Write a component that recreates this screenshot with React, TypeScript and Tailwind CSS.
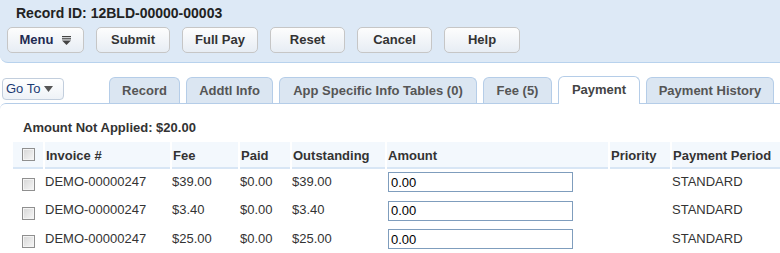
const buttons = [
  { label: 'Submit', w: 'w-[74px]' },
  { label: 'Full Pay', w: 'w-[76px]' },
  { label: 'Reset', w: 'w-[75px]' },
  { label: 'Cancel', w: 'w-[75px]' },
  { label: 'Help', w: 'w-[76px]' },
]

const tabs = [
  { label: 'Record', w: 'w-[71px]' },
  { label: 'Addtl Info', w: 'w-[87px]' },
  { label: 'App Specific Info Tables (0)', w: 'w-[198px]' },
  { label: 'Fee (5)', w: 'w-[69px]' },
  { label: 'Payment', w: 'w-[82px]', active: true },
  { label: 'Payment History', w: 'w-[128px]' },
]

const rows = [
  { invoice: 'DEMO-00000247', fee: '$39.00', paid: '$0.00', outstanding: '$39.00' },
  { invoice: 'DEMO-00000247', fee: '$3.40', paid: '$0.00', outstanding: '$3.40' },
  { invoice: 'DEMO-00000247', fee: '$25.00', paid: '$0.00', outstanding: '$25.00' },
]

const cols = 'grid grid-cols-[30px_125px_66px_50px_93px_221px_60px_109px] gap-x-[2px]'

function Checkbox() {
  return (
    <span className="block h-[13px] w-[13px] border border-[#8f8f8f] bg-gradient-to-br from-[#d6d6d6] to-[#f7f7f7] shadow-[inset_0_0_0_1px_#f4f4f4]" />
  )
}

function MenuIcon() {
  return (
    <svg width="9" height="9" viewBox="0 0 9 9" className="ml-[9px]">
      <rect x="0" y="0" width="9" height="1.2" fill="#444" />
      <rect x="0" y="2.2" width="9" height="1.2" fill="#444" />
      <polygon points="0,4.4 9,4.4 4.5,9" fill="#444" />
    </svg>
  )
}

function HeaderCell({ children }: { children?: React.ReactNode }) {
  return (
    <div className="h-[27px] border-b-2 border-[#d8e6f5] bg-[#f3f8fd] pl-[1px] pt-[6px] text-[13px] leading-[16px] font-bold text-[#333]">
      {children}
    </div>
  )
}

export default function App() {
  return (
    <div className="h-[253px] w-[780px] overflow-hidden bg-white font-['Liberation_Sans',Arial,sans-serif]">
      <div className="h-[63px] rounded-bl-[8px] border-b border-[#b8d2ed] bg-[#dde9f6]">
        <div className="pl-[16px] pt-[5px] text-[14px] leading-[16px] font-bold text-[#222]">
          Record ID: 12BLD-00000-00003
        </div>
        <div className="mt-[6px] flex gap-[12px] pl-[7px]">
          <button className="flex h-[26px] w-[77px] items-center justify-center rounded-[5px] border border-[#c6c6c6] bg-gradient-to-b from-[#fdfdfd] to-[#e7edf4] text-[13px] font-bold text-[#1e2b52]">
            Menu
            <MenuIcon />
          </button>
          {buttons.map((b) => (
            <button
              key={b.label}
              className={`h-[26px] ${b.w} rounded-[5px] border border-[#c6c6c6] bg-gradient-to-b from-[#fdfdfd] to-[#e7edf4] text-[13px] font-bold text-[#333]`}
            >
              {b.label}
            </button>
          ))}
        </div>
      </div>

      <div className="mt-[13px] flex h-[27px] items-start">
        <button className="ml-[2px] mt-[2px] flex h-[22px] w-[62px] items-center rounded-[4px] border border-[#c2cedd] bg-gradient-to-b from-white to-[#eef2f7] pl-[3px] text-[13px] text-[#1b3a73]">
          Go To
          <svg width="9" height="6" viewBox="0 0 9 6" className="ml-[4px]">
            <polygon points="0,0 9,0 4.5,6" fill="#555" />
          </svg>
        </button>
        <div className="ml-[45px] flex h-[27px] items-end gap-[6px]">
          {tabs.map((t) =>
            t.active ? (
              <div
                key={t.label}
                className={`relative z-10 -mb-px flex h-[28px] ${t.w} items-center justify-center rounded-t-[6px] border border-b-0 border-[#b5cde8] bg-white pb-[1px] text-[13px] font-bold text-[#444]`}
              >
                {t.label}
              </div>
            ) : (
              <div
                key={t.label}
                className={`flex h-[26px] ${t.w} items-center justify-center rounded-t-[6px] border border-b-0 border-[#b5cde8] bg-[#dbe6f2] text-[13px] font-bold text-[#555]`}
              >
                {t.label}
              </div>
            ),
          )}
        </div>
      </div>

      <div className="rounded-tl-[6px] border-t border-[#b5cde8]">
        <div className="pl-[23px] pt-[16px] text-[13px] leading-[16px] font-bold text-[#333]">
          Amount Not Applied: $20.00
        </div>
        <div className="ml-[13px] mt-[6px]">
          <div className={cols}>
            <div className="flex h-[27px] justify-center border-b-2 border-[#d8e6f5] bg-[#f3f8fd] pt-[6px]">
              <Checkbox />
            </div>
            <HeaderCell>Invoice #</HeaderCell>
            <HeaderCell>Fee</HeaderCell>
            <HeaderCell>Paid</HeaderCell>
            <HeaderCell>Outstanding</HeaderCell>
            <HeaderCell>Amount</HeaderCell>
            <HeaderCell>Priority</HeaderCell>
            <HeaderCell>Payment Period</HeaderCell>
          </div>
          {rows.map((r, i) => (
            <div key={i} className={`${cols} h-[28.5px] pt-[3px] text-[13px] leading-[16px] text-[#333]`}>
              <div className="flex justify-center pt-[6px]">
                <Checkbox />
              </div>
              <div className="pt-[1.5px]">{r.invoice}</div>
              <div className="pt-[1.5px]">{r.fee}</div>
              <div className="pt-[1.5px]">{r.paid}</div>
              <div className="pt-[1.5px]">{r.outstanding}</div>
              <div>
                <input
                  readOnly
                  value="0.00"
                  className="ml-[1px] h-[20px] w-[185px] border border-[#7f9dbd] px-[2px] text-[13px] text-black outline-none"
                />
              </div>
              <div />
              <div className="pt-[1.5px]">STANDARD</div>
            </div>
          ))}
        </div>
      </div>
    </div>
  )
}
